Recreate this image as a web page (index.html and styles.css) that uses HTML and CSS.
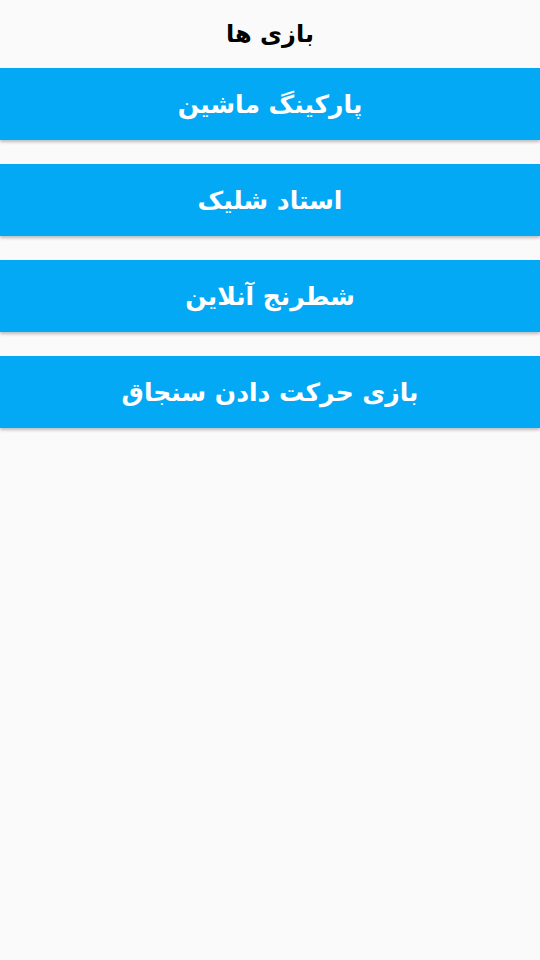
FILE: index.html
```html
<!DOCTYPE html>
<html lang="fa" dir="rtl">
<head>
<meta charset="utf-8">
<link rel="stylesheet" href="styles.css">
</head>
<body>
<header class="title">بازی ها</header>
<main class="list">
  <div class="btn">پارکینگ ماشین</div>
  <div class="btn">استاد شلیک</div>
  <div class="btn">شطرنج آنلاین</div>
  <div class="btn">بازی حرکت دادن سنجاق</div>
</main>
</body>
</html>
```
FILE: styles.css
```css
html, body {
  margin: 0;
  padding: 0;
  background: #fafafa;
  width: 540px;
  height: 960px;
  font-family: "DejaVu Sans", sans-serif;
}
.title {
  height: 68px;
  display: flex;
  align-items: center;
  justify-content: center;
  font-size: 24px;
  font-weight: bold;
  color: #000;
}
.list {
  display: flex;
  flex-direction: column;
  gap: 24px;
}
.btn {
  height: 72px;
  background: #03a9f4;
  color: #fff;
  font-size: 25px;
  font-weight: bold;
  display: flex;
  align-items: center;
  justify-content: center;
  box-shadow: 0 2px 3px rgba(0,0,0,0.25);
}
```
